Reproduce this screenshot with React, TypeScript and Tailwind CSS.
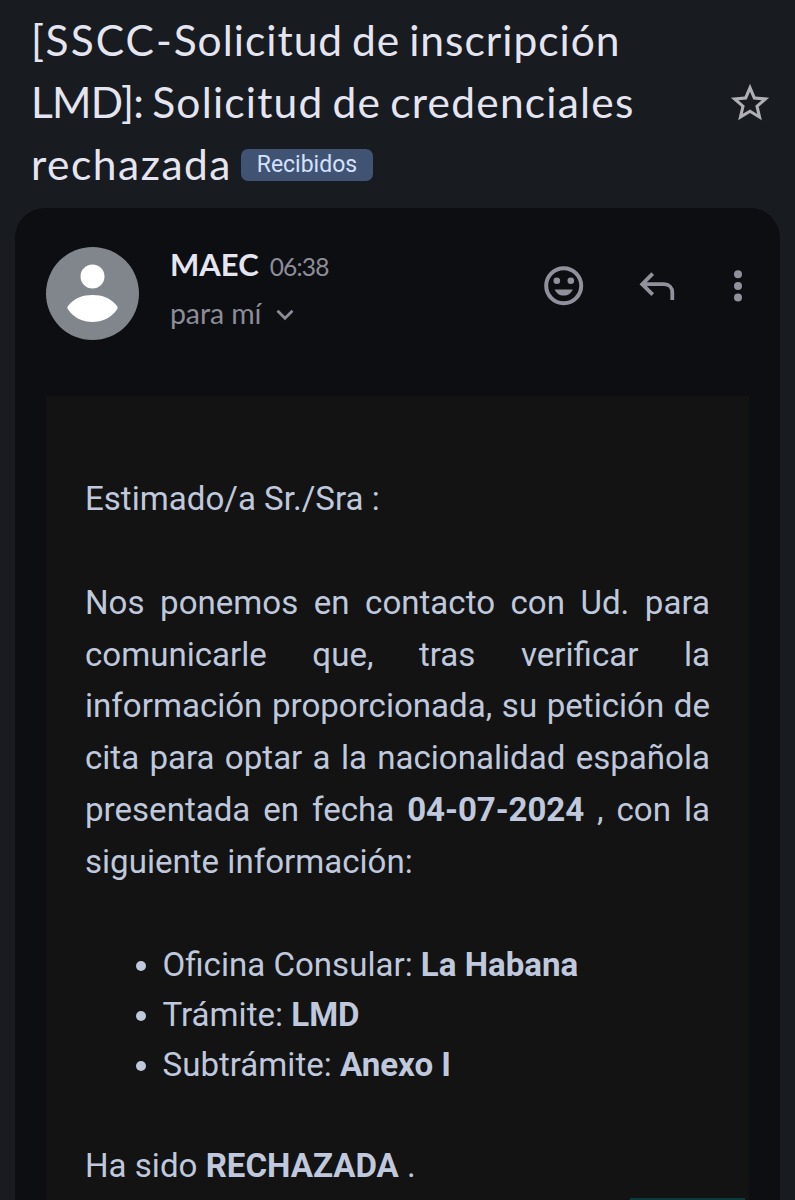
const details=[
  {label:"Oficina Consular:",value:"La Habana"},
  {label:"Trámite:",value:"LMD"},
  {label:"Subtrámite:",value:"Anexo I"},
]

const StarIcon = () => (
  <svg viewBox="0 0 24 24" className="size-[46px]" fill="#aeb0b4">
    <path d="M22 9.24l-7.19-.62L12 2 9.19 8.63 2 9.24l5.46 4.73L5.82 21 12 17.27 18.18 21l-1.63-7.03L22 9.24zM12 15.4l-3.76 2.27 1-4.28-3.32-2.88 4.38-.38L12 6.1l1.71 4.04 4.38.38-3.32 2.88 1 4.28L12 15.4z"/>
  </svg>
)

const Avatar = () => (
  <svg viewBox="0 0 93 93" className="size-[93px] shrink-0">
    <circle cx="46.5" cy="46.5" r="46.5" fill="#80868b"/>
    <circle cx="46.5" cy="29.5" r="12" fill="#fff"/>
    <path d="M22 59C28 51 37 48 46.5 48S65 51 71 59Q72.5 60.800 71 62.5C65 71 56 75 46.5 75S28 71 22 62.5Q20.5 60.800 22 59Z" fill="#fff"/>
  </svg>
)

const Actions = () => (
  <div className="flex items-center text-[#90919d]">
    <svg viewBox="0 0 40 40" className="size-10" fill="none">
      <circle cx="19.7" cy="19.7" r="17.5" stroke="currentColor" strokeWidth="4"/>
      <circle cx="12.8" cy="14.7" r="3.3" fill="currentColor"/>
      <circle cx="26.8" cy="14.7" r="3.3" fill="currentColor"/>
      <path d="M10.7 23.4H28.8C27.3 27.200 24 29.500 19.7 29.500S12.2 27.200 10.7 23.400Z" fill="currentColor"/>
    </svg>
    <svg viewBox="0 0 36 30" className="ml-[55px] h-[30px] w-9" fill="none" stroke="currentColor" strokeWidth="3.8">
      <path d="M13.7 2.7L3.2 13.2L13.7 23.7M3.2 13.2H25C30 13.2 33.3 16.5 33.3 21.5V29"/>
    </svg>
    <svg viewBox="0 0 8 32" className="ml-[59px] h-8 w-2" fill="currentColor">
      <circle cx="4" cy="4.2" r="4"/>
      <circle cx="4" cy="15.9" r="4"/>
      <circle cx="4" cy="27.6" r="4"/>
    </svg>
  </div>
)

const App = () => {
  return (
    <div className="flex h-[1200px] w-[795px] flex-col overflow-hidden bg-[#181b20] font-['Roboto',sans-serif]">
      <header className="flex h-[208px] shrink-0 justify-between pt-[9px] pl-[31px] pr-[22px]">
        <h1 className="font-['Lato',sans-serif] text-[42.5px] leading-[62px] font-normal whitespace-nowrap text-[#e4e5f0]">
          <span className="block tracking-[1px] [word-spacing:-3px]">
            <span className="tracking-[2px]">[SSCC-</span>Solicitud de inscripción
          </span>
          <span className="block tracking-[1.2px] [word-spacing:-3px]">
            <span className="tracking-[-0.8px]">LMD]:</span> Solicitud de credenciales
          </span>
          <span className="flex items-center">
            <span className="tracking-[1.5px]">rechazada</span>
            <span className="mt-px ml-[9px] flex h-8 w-[132px] items-center justify-center rounded-[7px] bg-[#415373] font-['Roboto',sans-serif] text-[23px] text-[#d3e2ff]">Recibidos</span>
          </span>
        </h1>
        <div className="pt-[71px]"><StarIcon/></div>
      </header>

      <main className="mx-[15px] flex grow flex-col rounded-t-[30px] bg-[#0d0e12] px-[31px]">
        <div className="flex h-[188px] shrink-0 pt-[39px]">
          <Avatar/>
          <div className="ml-[31px] font-['Lato',sans-serif] whitespace-nowrap">
            <div className="-mt-[2px] flex h-[38px] items-baseline">
              <span className="text-[31px] leading-[38px] font-bold text-[#e4e5f0]">MAEC</span>
              <span className="ml-[11px] text-[24.5px] tracking-[-0.8px] text-[#8c8d98]">06:38</span>
            </div>
            <div className="mt-[11px] flex items-center text-[#8c8d98]">
              <span className="text-[28.5px] leading-[38px] tracking-[-0.1px]">para mí</span>
              <svg viewBox="0 0 18 12" className="mt-[3px] ml-[15px] h-3 w-[18px]" fill="none" stroke="currentColor" strokeWidth="2.8">
                <path d="M1.5 1.8L9 9.3L16.5 1.8"/>
              </svg>
            </div>
          </div>
          <div className="mr-[7px] ml-auto pt-[19px]"><Actions/></div>
        </div>

        <section className="flex w-[703px] grow flex-col bg-[#131313] px-[39px] pt-[77px] text-[33.1px] leading-[51.8px] text-[#bfc8dc]">
          <p>Estimado/a Sr./Sra :</p>
          <p className="mt-[52px] text-justify">
            Nos ponemos en contacto con Ud. para comunicarle que, tras verificar la información proporcionada, su petición de cita para optar a la nacionalidad española presentada en fecha <b className="font-bold tracking-[-0.1px]">04-07-2024</b> , con la siguiente información:
          </p>
          <ul className="mt-[52px] list-disc pl-[77.5px] leading-[50px]">
            {details.map((item)=>(
              <li key={item.label}>{item.label} <b className="font-bold">{item.value}</b></li>
            ))}
          </ul>
          <p className="mt-[50px]">Ha sido <b className="font-bold">RECHAZADA</b> .</p>
          <div className="mt-auto -mr-[35px] h-[2px] w-[115px] shrink-0 self-end bg-[#0d3b3c]"></div>
        </section>
      </main>
    </div>
  )
}

export default App
